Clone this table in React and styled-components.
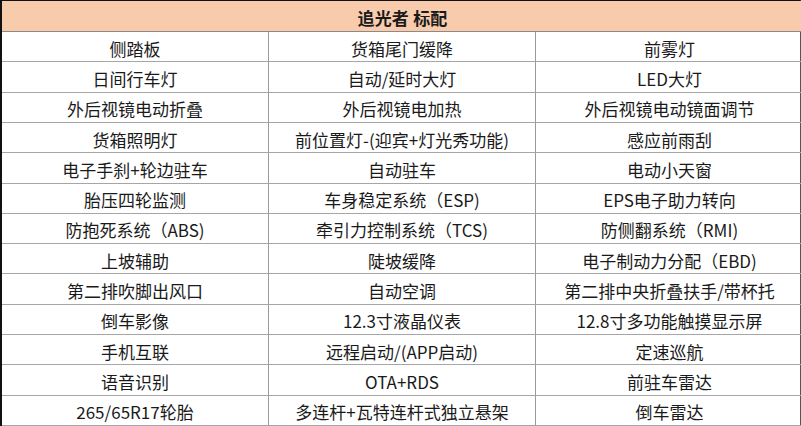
import React from "react";
import styled, { createGlobalStyle } from "styled-components";

const Global = createGlobalStyle`
  html, body { margin: 0; padding: 0; background: #ffffff; }
  * { box-sizing: border-box; }
`;

const Table = styled.div`
  width: 801px;
  height: 426px;
  display: grid;
  grid-template-columns: 267px 267px 267px;
  grid-template-rows: 31px repeat(13, 1fr);
  border-top: 1px solid #111;
  border-left: 2px solid #111;
  border-right: 1px solid #555;
  font-family: "Noto Sans CJK SC", "Noto Sans", sans-serif;
  color: #1a1a1a;
  background: #fff;
`;

const Header = styled.div`
  grid-column: 1 / span 3;
  background: #f8cbad;
  border-bottom: 1px solid #8a8a8a;
  display: flex;
  align-items: center;
  justify-content: center;
  font-size: 17px;
  font-weight: 700;
  padding-top: 2px;
  letter-spacing: 0.2px;
`;

const Cell = styled.div`
  display: flex;
  align-items: center;
  justify-content: center;
  font-size: 17px;
  line-height: 1;
  padding-top: 3px;
  white-space: nowrap;
  border-bottom: 1px solid #a6a6a6;
  border-right: ${(p) => (p.$last ? "none" : "1px solid #9a9a9a")};
`;

const rows = [
  ["侧踏板", "货箱尾门缓降", "前雾灯"],
  ["日间行车灯", "自动/延时大灯", "LED大灯"],
  ["外后视镜电动折叠", "外后视镜电加热", "外后视镜电动镜面调节"],
  ["货箱照明灯", "前位置灯-(迎宾+灯光秀功能)", "感应前雨刮"],
  ["电子手刹+轮边驻车", "自动驻车", "电动小天窗"],
  ["胎压四轮监测", "车身稳定系统（ESP)", "EPS电子助力转向"],
  ["防抱死系统（ABS)", "牵引力控制系统（TCS)", "防侧翻系统（RMI)"],
  ["上坡辅助", "陡坡缓降", "电子制动力分配（EBD)"],
  ["第二排吹脚出风口", "自动空调", "第二排中央折叠扶手/带杯托"],
  ["倒车影像", "12.3寸液晶仪表", "12.8寸多功能触摸显示屏"],
  ["手机互联", "远程启动/(APP启动)", "定速巡航"],
  ["语音识别", "OTA+RDS", "前驻车雷达"],
  ["265/65R17轮胎", "多连杆+瓦特连杆式独立悬架", "倒车雷达"],
];

export default function App() {
  return (
    <>
      <Global />
      <Table>
        <Header>追光者 标配</Header>
        {rows.map((r, i) =>
          r.map((t, j) => (
            <Cell key={`${i}-${j}`} $last={j === 2}>
              {t}
            </Cell>
          ))
        )}
      </Table>
    </>
  );
}
